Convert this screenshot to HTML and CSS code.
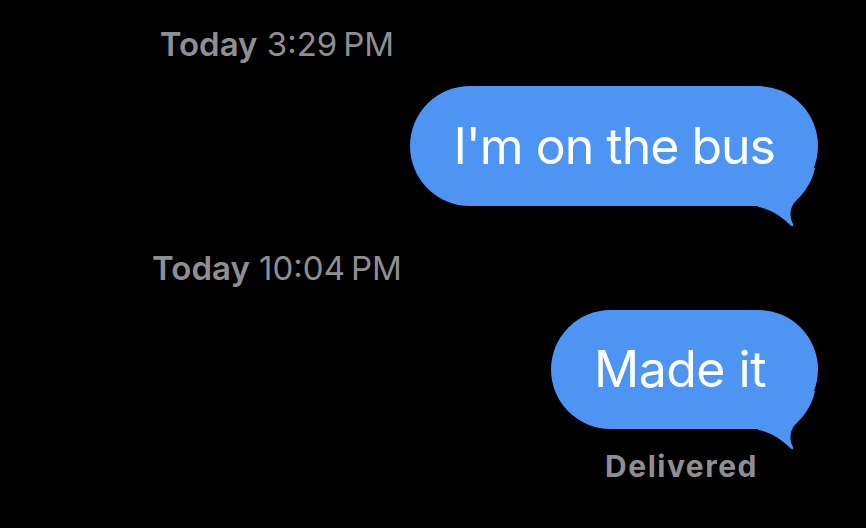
FILE: index.html
```html
<!DOCTYPE html>
<html lang="en">
<head>
    <meta charset="UTF-8">
    <meta name="viewport" content="width=device-width, initial-scale=1.0">
    <title>Messages</title>
    <link rel="stylesheet" href="styles.css">
</head>
<body>
    <div class="thread">
        <div class="stamp"><b>Today</b> 3:29&#8201;PM</div>
        <div class="row">
            <div class="bubble">I'm on the bus
                <svg class="tail" viewBox="0 0 60 60" width="60" height="60">
                    <path d="M0 20 L0 39 C12 41 22 48 30 55 C33 58 36 60 35 56 C32 50 31 42 36 35 C44 27 54 16 57 0 L20 0 Z"/>
                </svg>
            </div>
        </div>
        <div class="stamp second"><b>Today</b> 10:04&#8201;PM</div>
        <div class="row">
            <div class="bubble short">Made it
                <svg class="tail" viewBox="0 0 60 60" width="60" height="60">
                    <path d="M0 20 L0 39 C12 41 22 48 30 55 C33 58 36 60 35 56 C32 50 31 42 36 35 C44 27 54 16 57 0 L20 0 Z"/>
                </svg>
            </div>
        </div>
        <div class="status">Delivered</div>
    </div>
</body>
</html>
```

FILE: styles.css
```css
body {
    margin: 0;
    background-color: black;
    font-family: Inter, "Liberation Sans", sans-serif;
}
.thread {
    padding: 24px 48px 0 0;
}
.stamp {
    width: 554px;
    text-align: center;
    font-size: 33px;
    line-height: 40px;
    color: #8e8e93;
}
.stamp b {
    font-weight: 600;
}
.stamp.second {
    margin-top: 42px;
}
.row {
    display: flex;
    justify-content: flex-end;
    margin-top: 22px;
}
.bubble {
    position: relative;
    height: 120px;
    line-height: 120px;
    padding: 0 43px;
    border-radius: 60px;
    background-color: #4e94f3;
    color: white;
    font-size: 50px;
    letter-spacing: -1px;
    white-space: nowrap;
}
.bubble.short {
    min-width: 181px;
    height: 119px;
    line-height: 119px;
    letter-spacing: -0.5px;
}
.tail {
    position: absolute;
    right: 0;
    bottom: -22px;
    fill: #4e94f3;
}
.status {
    margin-top: 20px;
    padding-right: 60px;
    text-align: right;
    font-size: 30px;
    line-height: 34px;
    font-weight: 700;
    letter-spacing: 1.5px;
    color: #8e8e93;
}
```
